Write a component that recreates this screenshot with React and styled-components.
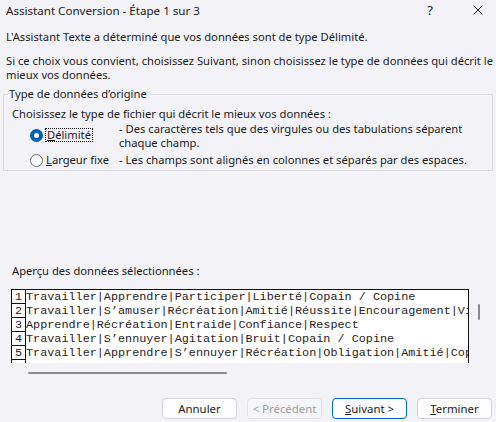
import styled, { createGlobalStyle } from 'styled-components'

const UI_FONT = '"Noto Sans", "Open Sans", sans-serif'
const MONO_FONT = '"Liberation Mono", "DejaVu Sans Mono", monospace'

const GlobalStyle = createGlobalStyle`
  html, body {
    margin: 0;
    padding: 0;
    background: #f3f2f7;
  }
  body {
    font-family: ${UI_FONT};
    font-size: 11.2px;
    color: #1b1b1b;
  }
`

const Window = styled.div`
  width: 496px;
  height: 422px;
  overflow: hidden;
  display: flex;
  flex-direction: column;
  background: #f3f2f7;
`

const TitleBar = styled.div`
  height: 20px;
  display: flex;
  align-items: center;
  padding-left: 6px;
`

const TitleText = styled.div`
  flex: 1;
  font-size: 11.6px;
  color: #1a1a1a;
  white-space: nowrap;
`

const TitleButton = styled.div`
  width: ${({ $w }) => $w}px;
  height: 20px;
  display: flex;
  align-items: center;
  justify-content: center;
  font-size: 13px;
  color: #222;
`

const Body = styled.div`
  display: flex;
  flex-direction: column;
  padding: 10px 3px 0;
`

const Intro = styled.p`
  margin: 0 0 ${({ $gap }) => $gap}px 3px;
  line-height: 14px;
  white-space: nowrap;
`

const Group = styled.fieldset`
  margin: 0;
  padding: 0 0 3px 4px;
  border: 1px solid #dcdbe0;
  min-width: 0;
`

const Legend = styled.legend`
  padding: 0 1px;
  line-height: 14px;
`

const GroupPrompt = styled.div`
  margin: 6px 0 0 4px;
  line-height: 14px;
`

const OptionRow = styled.div`
  display: grid;
  grid-template-columns: 89px 1fr;
  margin-top: ${({ $gap }) => $gap}px;
  padding-left: 22px;
  line-height: 14px;
`

const OptionLabel = styled.label`
  display: flex;
  align-items: center;
  gap: 3px;
  height: 14px;
  margin-top: ${({ $offset }) => $offset}px;
  white-space: nowrap;
`

const Radio = styled.span`
  box-sizing: border-box;
  width: 13px;
  height: 13px;
  border-radius: 50%;
  flex: none;
  border: ${({ $checked }) => ($checked ? '4px solid #005fb8' : '1px solid #6a6a6a')};
  background: #fff;
`

const Focus = styled.span`
  outline: 1px dotted #111;
  padding: 0 1px;
  line-height: 12px;
`

const Key = styled.span`
  text-decoration: underline;
  text-underline-offset: 1px;
`

const Desc = styled.div`
  white-space: nowrap;
`

const PreviewLabel = styled.div`
  margin: 93px 0 0 9px;
  line-height: 14px;
`

const PreviewFrame = styled.div`
  display: flex;
  margin: 11px 0 0 8px;
`

const PreviewBox = styled.div`
  flex: none;
  box-sizing: border-box;
  width: 458px;
  height: 74px;
  overflow: hidden;
  display: flex;
  background: #fff;
  border: 1px solid #111;
  border-bottom: none;
  font-family: ${MONO_FONT};
  font-size: 11.8px;
  color: #2a2222;
`

const NumberColumn = styled.div`
  width: 13px;
  flex: none;
  border-right: 1px solid #111;
`

const NumberCell = styled.div`
  box-sizing: border-box;
  height: 14px;
  line-height: 14px;
  text-align: center;
  border-bottom: 1px solid #111;
`

const TextColumn = styled.div`
  flex: 1;
  min-width: 0;
  overflow: hidden;
`

const TextLine = styled.div`
  height: 14px;
  line-height: 14px;
  white-space: pre;
`

const VTrack = styled.div`
  flex: none;
  width: 12px;
  padding-left: 9px;
`

const VThumb = styled.div`
  width: 2px;
  height: 16px;
  margin-top: 15px;
  background: #8b8b8b;
  border-radius: 1px;
`

const HTrack = styled.div`
  margin: 9px 0 0 25px;
  height: 2px;
`

const HThumb = styled.div`
  width: 199px;
  height: 2px;
  background: #8b8b8b;
  border-radius: 1px;
`

const Footer = styled.div`
  display: flex;
  justify-content: flex-end;
  gap: 10px;
  margin-top: 24px;
  padding-right: 1px;
`

const Button = styled.button`
  box-sizing: border-box;
  width: 75px;
  height: 21px;
  padding: 0;
  border-radius: 4px;
  font-family: ${UI_FONT};
  font-size: 11.4px;
  border: 1px solid ${({ $primary, disabled }) => ($primary ? '#0067c0' : disabled ? '#e2e1e6' : '#d3d2d8')};
  background: ${({ disabled }) => (disabled ? '#f7f6fa' : '#fdfdfe')};
  color: ${({ disabled }) => (disabled ? '#9d9d9d' : '#1b1b1b')};
`

const rows = [
  'Travailler|Apprendre|Participer|Liberté|Copain / Copine',
  'Travailler|S’amuser|Récréation|Amitié|Réussite|Encouragement|Vivre ensemble',
  'Apprendre|Récréation|Entraide|Confiance|Respect',
  'Travailler|S’ennuyer|Agitation|Bruit|Copain / Copine',
  'Travailler|Apprendre|S’ennuyer|Récréation|Obligation|Amitié|Copain / Copine',
]

function CloseIcon() {
  return (
    <svg width="10" height="10" viewBox="0 0 10 10">
      <path d="M0.5 0.5 L9.5 9.5 M9.5 0.5 L0.5 9.5" stroke="#222" strokeWidth="1" fill="none" />
    </svg>
  )
}

export default function App() {
  return (
    <>
      <GlobalStyle />
      <Window>
        <TitleBar>
          <TitleText>Assistant Conversion - Étape 1 sur 3</TitleText>
          <TitleButton $w={60}>?</TitleButton>
          <TitleButton $w={36}>
            <CloseIcon />
          </TitleButton>
        </TitleBar>

        <Body>
          <Intro $gap={10}>L'Assistant Texte a déterminé que vos données sont de type Délimité.</Intro>
          <Intro $gap={5}>
            Si ce choix vous convient, choisissez Suivant, sinon choisissez le type de données qui décrit le
            <br />
            mieux vos données.
          </Intro>

          <Group>
            <Legend>Type de données d’origine</Legend>
            <GroupPrompt>Choisissez le type de fichier qui décrit le mieux vos données :</GroupPrompt>

            <OptionRow $gap={1}>
              <OptionLabel $offset={6}>
                <Radio $checked />
                <Focus>
                  <Key>D</Key>élimité
                </Focus>
              </OptionLabel>
              <Desc>
                - Des caractères tels que des virgules ou des tabulations séparent
                <br />
                chaque champ.
              </Desc>
            </OptionRow>

            <OptionRow $gap={3}>
              <OptionLabel $offset={0}>
                <Radio />
                <span>
                  <Key>L</Key>argeur fixe
                </span>
              </OptionLabel>
              <Desc>- Les champs sont alignés en colonnes et séparés par des espaces.</Desc>
            </OptionRow>
          </Group>

          <PreviewLabel>Aperçu des données sélectionnées :</PreviewLabel>
          <PreviewFrame>
            <PreviewBox>
              <NumberColumn>
                {rows.map((_, i) => (
                  <NumberCell key={i}>{i + 1}</NumberCell>
                ))}
              </NumberColumn>
              <TextColumn>
                {rows.map((r, i) => (
                  <TextLine key={i}>{r}</TextLine>
                ))}
              </TextColumn>
            </PreviewBox>
            <VTrack>
              <VThumb />
            </VTrack>
          </PreviewFrame>
          <HTrack>
            <HThumb />
          </HTrack>

          <Footer>
            <Button>Annuler</Button>
            <Button disabled>&lt; Précédent</Button>
            <Button $primary>
              <Key>S</Key>uivant &gt;
            </Button>
            <Button>
              <Key>T</Key>erminer
            </Button>
          </Footer>
        </Body>
      </Window>
    </>
  )
}
